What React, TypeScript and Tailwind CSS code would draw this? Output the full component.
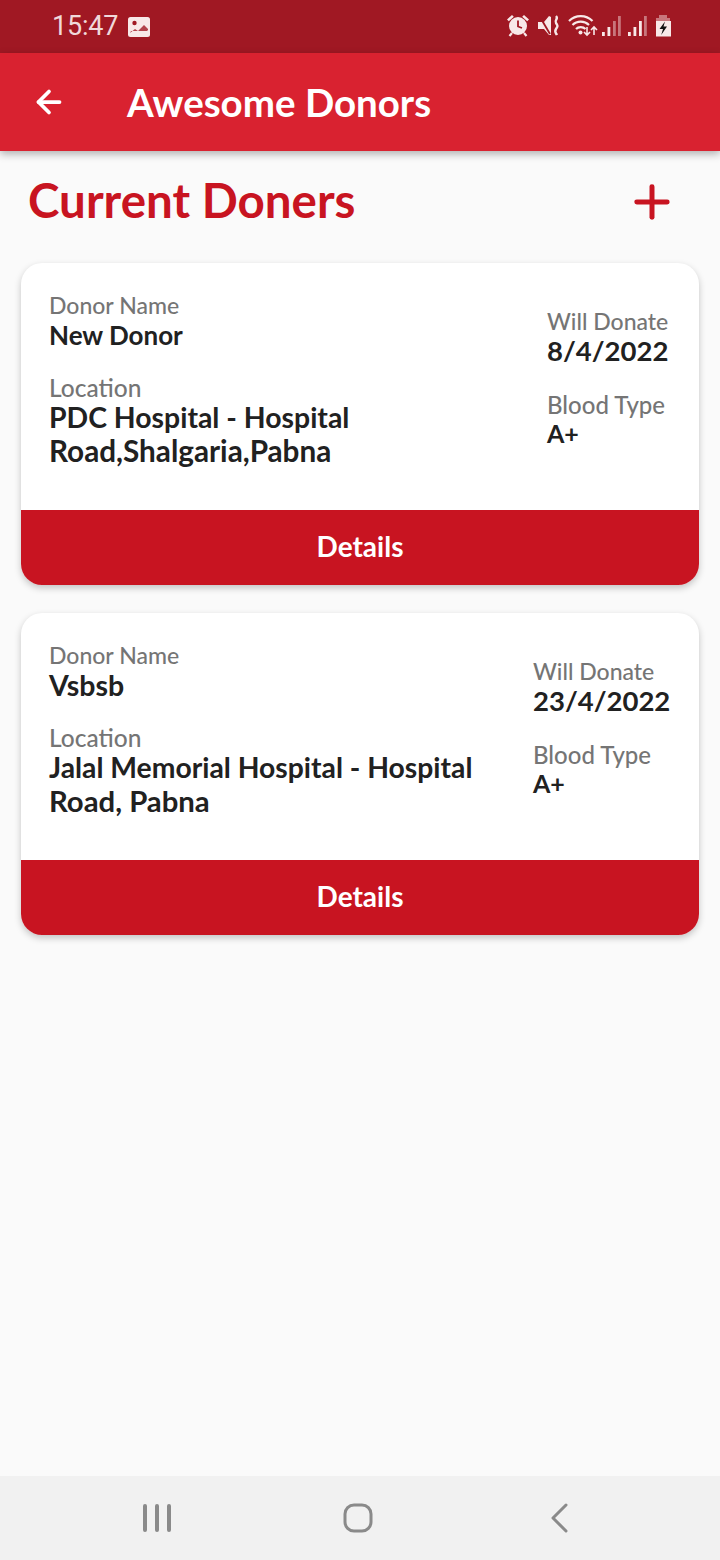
import React from "react";
import { ArrowLeft, Plus } from "lucide-react";

const font = { fontFamily: '"Lato", "Noto Sans", sans-serif' };

type CardProps = {
  name: string;
  nameClass: string;
  line1: string;
  line1Class: string;
  line2: string;
  line2Class: string;
  date: string;
  col: string;
};

function Card({ name, nameClass, line1, line1Class, line2, line2Class, date, col }: CardProps) {
  return (
    <div className="h-[322px] rounded-[21px] bg-white shadow-[0_3px_7px_rgba(0,0,0,0.22)] overflow-hidden flex flex-col">
      <div className="h-[247px] flex justify-between pl-[28px] pr-[28px]">
        <div className="pt-[29px]">
          <div className="h-[27px] leading-[27px] text-[23px] font-medium text-[#757575] whitespace-nowrap">Donor Name</div>
          <div className={`-mt-[1px] h-[34px] leading-[34px] font-bold text-[#212121] whitespace-nowrap ${nameClass}`}>{name}</div>
          <div className="mt-[22px] h-[27px] leading-[27px] text-[24.5px] font-medium text-[#757575]">Location</div>
          <div className={`leading-[33px] font-bold text-[#212121] whitespace-nowrap ${line1Class}`}>{line1}</div>
          <div className={`leading-[33px] font-bold text-[#212121] whitespace-nowrap ${line2Class}`}>{line2}</div>
        </div>
        <div className={col}>
          <div className="pt-[45px] h-[71px] leading-[27px] text-[23px] font-medium text-[#757575] whitespace-nowrap">Will Donate</div>
          <div className="h-[34px] leading-[34px] text-[27.5px] font-bold text-[#212121] whitespace-nowrap">{date}</div>
          <div className="mt-[23px] h-[27px] leading-[27px] text-[24px] font-medium text-[#757575] whitespace-nowrap">Blood Type</div>
          <div className="-mt-[2px] h-[34px] leading-[34px] text-[25px] font-bold text-[#212121]">A+</div>
        </div>
      </div>
      <div className="h-[75px] pb-[3px] bg-[#c81421] flex items-center justify-center text-white text-[28px] font-bold">Details</div>
    </div>
  );
}

function StatusIcons() {
  return (
    <svg width="167" height="30" viewBox="0 0 167 30" className="text-[#f8e8e8]" fill="currentColor">
      {/* alarm */}
      <circle cx="14" cy="14" r="9" />
      <path d="M14 8.500v6l4 1.500" stroke="#a01823" strokeWidth="1.800" fill="none" />
      <path d="M3 7.500 8 3l1.800 1.800-5 4.500zM25 7.500 20 3l-1.800 1.800 5 4.500z" />
      <path d="M8 21l-2.500 3M20 21l2.500 3" stroke="currentColor" strokeWidth="2.200" />
      {/* mute */}
      <path d="M34 10h6l5-6 2 1v18h-2l-5-6h-6z" />
      <path d="M36 5l10 17" stroke="#a01823" strokeWidth="1.800" />
      <path d="M52 4c3 3-2 4 0 7s2 3 0 6 0 4 1 6" stroke="currentColor" strokeWidth="2.400" fill="none" />
      {/* wifi */}
      <path d="M65 9c6.500-6.500 17-6.500 23.500 0" stroke="currentColor" strokeWidth="2.200" fill="none" />
      <path d="M68.500 13c4.500-4.500 12-4.500 16.500 0" stroke="currentColor" strokeWidth="2.200" fill="none" />
      <path d="M72 17c2.500-2.500 7-2.500 9.500 0" stroke="currentColor" strokeWidth="2.200" fill="none" />
      <circle cx="76.500" cy="20.500" r="2" />
      <path d="M83 15v8m-3-3 3 3 3-3M90 23v-8m-3 3 3-3 3 3" stroke="currentColor" strokeWidth="1.600" fill="none" />
      {/* signal 1 */}
      <rect x="98" y="20" width="2.800" height="4" />
      <rect x="103.500" y="15" width="2.800" height="9" />
      <rect x="109" y="9" width="2.800" height="15" opacity="0.45" />
      <rect x="114" y="4" width="2.800" height="20" opacity="0.45" />
      {/* signal 2 */}
      <rect x="124" y="20" width="2.800" height="4" />
      <rect x="129.500" y="15" width="2.800" height="9" />
      <rect x="135" y="9" width="2.800" height="15" />
      <rect x="140" y="4" width="2.800" height="20" opacity="0.45" />
      {/* battery */}
      <path d="M155 3h8v3h3v4h-14V6h3z" opacity="0.45" />
      <rect x="152" y="9" width="15" height="15.500" />
      <path d="M161 9.500l-5.500 7.500h3.500l-1.800 6 5.800-8.500h-3.500l1.500-5z" fill="#111" />
    </svg>
  );
}

export default function App() {
  return (
    <div style={font} className="w-[720px] h-[1560px] bg-[#fafafa] flex flex-col overflow-hidden">
      <div className="h-[53px] bg-[#a01823] flex items-center justify-between pl-[52px] pr-[49px]">
        <div className="flex items-center gap-[11px]">
          <span style={{ fontFamily: "Roboto, sans-serif" }} className="text-[27px] leading-[27px] text-[#f0d8da] tracking-[-0.2px]">15:47</span>
          <svg width="22" height="20" viewBox="0 0 22 20" className="-ml-[1px]">
            <rect width="22" height="20" rx="2.500" fill="#f8e8e8" />
            <circle cx="6.500" cy="6" r="2.200" fill="#a01823" />
            <path d="M2 16l5-4 3 2 6-6 4 4v1l-1 1H3z" fill="#a01823" opacity="0.8" />
          </svg>
        </div>
        <StatusIcons />
      </div>
      <div className="h-[98px] bg-[#d92230] flex items-center text-white shadow-[0_3px_8px_rgba(0,0,0,0.3)] relative">
        <div className="w-[127px] pl-[31px] shrink-0">
          <ArrowLeft size={36} strokeWidth={2.5} />
        </div>
        <span className="text-[38.5px] font-bold whitespace-nowrap pt-[2px]">Awesome Donors</span>
      </div>
      <div className="flex-1 px-[21px] pt-[20px]">
        <div className="h-[60px] flex items-center justify-between pl-[7px] pr-[21px]">
          <span className="text-[47.500px] leading-[56px] -mt-[3px] font-bold text-[#c81421] whitespace-nowrap">Current Doners</span>
          <Plus size={52} strokeWidth={2.3} className="text-[#c81421] mt-[2px]" />
        </div>
        <div className="mt-[32px] flex flex-col gap-[28px]">
          <Card
            name="New Donor"
            nameClass="text-[26px]"
            line1="PDC Hospital - Hospital"
            line1Class="text-[28.4px]"
            line2="Road,Shalgaria,Pabna"
            line2Class="text-[29.7px]"
            date="8/4/2022"
            col="w-[125px] -mr-[1px] shrink-0"
          />
          <Card
            name="Vsbsb"
            nameClass="text-[28.5px]"
            line1="Jalal Memorial Hospital - Hospital"
            line1Class="text-[28.3px]"
            line2="Road, Pabna"
            line2Class="text-[29.3px]"
            date="23/4/2022"
            col="w-[139px] -mr-[1px] shrink-0"
          />
        </div>
      </div>
      <div className="h-[84px] bg-[#f1f1f1] flex items-center shrink-0 pl-[143px] pr-[152px] justify-between">
        <svg width="28" height="28" viewBox="0 0 28 28" stroke="#8a8a8a" strokeWidth="4" strokeLinecap="round"><path d="M2 2v24M14 2v24M26 2v24" /></svg>
        <svg width="30" height="30" viewBox="0 0 30 30" fill="none" stroke="#8a8a8a" strokeWidth="3" className="-ml-[6px]"><rect x="2" y="2" width="26" height="26" rx="9" /></svg>
        <svg width="18" height="30" viewBox="0 0 18 30" fill="none" stroke="#8a8a8a" strokeWidth="3" strokeLinecap="round" strokeLinejoin="round"><path d="M16 2 3 15l13 13" /></svg>
      </div>
    </div>
  );
}
